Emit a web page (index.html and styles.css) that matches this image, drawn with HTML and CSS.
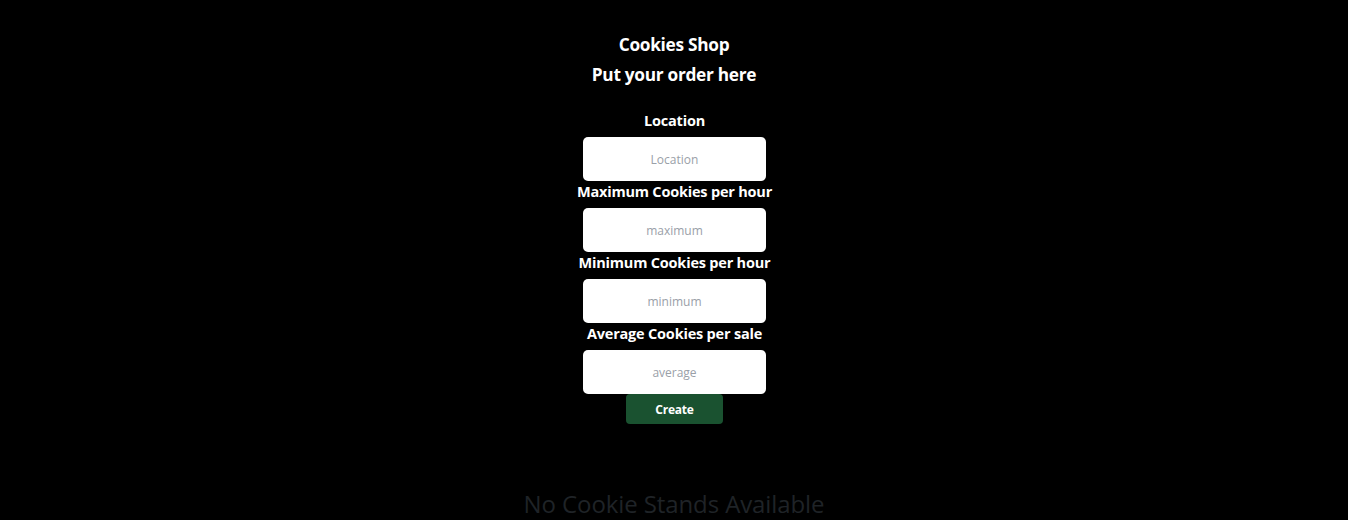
FILE: index.html
```html
<!DOCTYPE html>
<html lang="en">
<head>
<meta charset="utf-8">
<title>Cookies Shop</title>
<link rel="stylesheet" href="styles.css">
</head>
<body>
<main class="page">
  <header class="head">
    <h1 class="title">Cookies Shop</h1>
    <h2 class="subtitle">Put your order here</h2>
  </header>
  <form class="order">
    <label class="label" for="loc">Location</label>
    <input class="field" id="loc" type="text" placeholder="Location">
    <label class="label" for="max">Maximum Cookies per hour</label>
    <input class="field" id="max" type="text" placeholder="maximum">
    <label class="label" for="min">Minimum Cookies per hour</label>
    <input class="field" id="min" type="text" placeholder="minimum">
    <label class="label" for="avg">Average Cookies per sale</label>
    <input class="field" id="avg" type="text" placeholder="average">
    <button class="create" type="button">Create</button>
  </form>
  <section class="stands">
    <p class="empty">No Cookie Stands Available</p>
  </section>
  <footer class="foot">
    <p class="foot-text">Author: Abdallah Ikhadi</p>
  </footer>
</main>
</body>
</html>
```
FILE: styles.css
```css
html, body {
  margin: 0;
  padding: 0;
  background: #000;
}
body {
  font-family: "Open Sans", "Noto Sans", "Liberation Sans", sans-serif;
  color: #fff;
}
.page {
  display: flex;
  flex-direction: column;
  align-items: center;
}
.head {
  display: flex;
  flex-direction: column;
  align-items: center;
  padding-top: 30px;
}
.title, .subtitle {
  margin: 0;
  font-size: 17.3px;
  font-weight: 700;
  line-height: 30px;
  letter-spacing: -0.3px;
}
.order {
  display: flex;
  flex-direction: column;
  align-items: center;
  width: 201px;
  padding-left: 1px;
  margin-top: 20px;
}
.label {
  box-sizing: border-box;
  font-size: 14.5px;
  font-weight: 700;
  line-height: 21px;
  height: 27px;
  padding-bottom: 6px;
  letter-spacing: -0.2px;
  white-space: nowrap;
}
.field {
  box-sizing: border-box;
  width: 183px;
  height: 44px;
  border: 0;
  border-radius: 5px;
  background: #fff;
  text-align: center;
  font-family: inherit;
  font-size: 12px;
  color: #333;
  outline: none;
}
.field::placeholder {
  color: #9aa0a8;
}
.create {
  width: 97px;
  height: 30px;
  border: 0;
  border-radius: 4px;
  background: #1a5230;
  color: #fff;
  font-family: inherit;
  font-size: 12px;
  font-weight: 700;
  letter-spacing: -0.2px;
  cursor: pointer;
}
.stands {
  margin-top: 64px;
}
.empty {
  margin: 0;
  font-size: 24px;
  line-height: 32px;
  color: #1f2327;
  letter-spacing: -0.1px;
}
.foot {
  align-self: stretch;
  display: flex;
  justify-content: flex-end;
  padding-right: 148px;
}
.foot-text {
  margin: 0;
  font-size: 14px;
  line-height: 20px;
  color: #8a8a8a;
}
```
